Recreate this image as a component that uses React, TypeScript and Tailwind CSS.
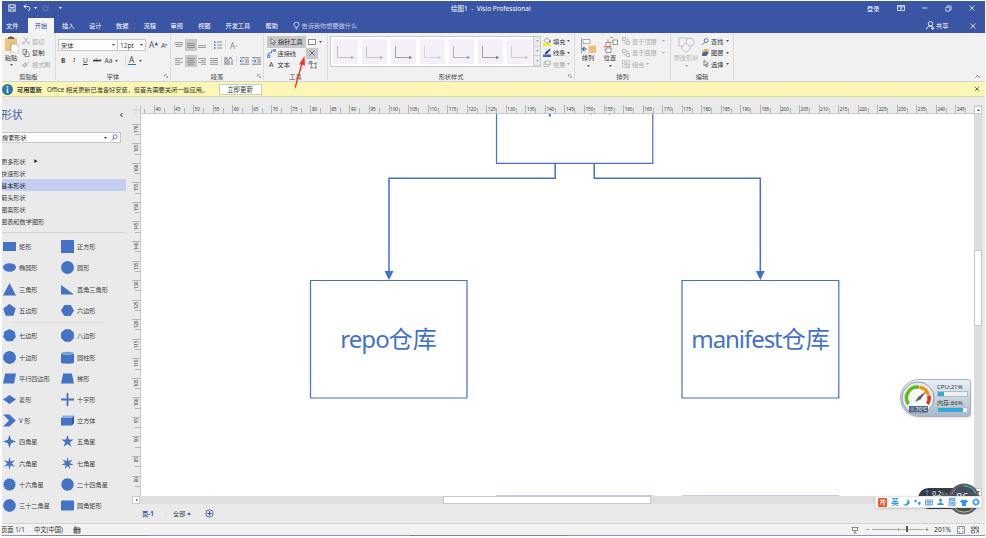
import React from "react";

type P = { children?: React.ReactNode; className?: string };

const T = ({ children, className = "" }: P) => (
  <span className={`whitespace-nowrap ${className}`}>{children}</span>
);

const Caret = ({ className = "text-[#555]" }: { className?: string }) => (
  <svg className={`h-[2px] w-[3px] shrink-0 ${className}`} viewBox="0 0 6 4">
    <path d="M0 0h6L3 4z" fill="currentColor" />
  </svg>
);

const Launcher = () => (
  <svg className="h-1 w-1 shrink-0 text-[#999]" viewBox="0 0 8 8" fill="none" stroke="currentColor" strokeWidth="1.4">
    <path d="M1 6V1h5M3 3l4 4M7 4v3H4" />
  </svg>
);

const Svg = ({ children, className = "", vb = "0 0 16 16" }: P & { vb?: string }) => (
  <svg className={`shrink-0 ${className}`} viewBox={vb} fill="none" stroke="currentColor" strokeWidth="1.5">
    {children}
  </svg>
);

const Group = ({ label, children, className = "", launcher = false }: P & { label: string; launcher?: boolean }) => (
  <section className={`relative flex shrink-0 flex-col border-r border-[#dcdcdc] ${className}`}>
    <div className="h-[38.500px] shrink-0">{children}</div>
    <div className="flex h-[9px] items-center">
      <span className="flex-1 whitespace-nowrap text-center text-[#444]">{label}</span>
      {launcher && <span className="-ml-[6px] mr-[2px]"><Launcher /></span>}
    </div>
  </section>
);

const Lines = ({ rows, className = "" }: { rows: [number, number][]; className?: string }) => (
  <svg className={`h-[9px] w-[10px] shrink-0 ${className}`} viewBox="0 0 10 9" stroke="#777" strokeWidth="0.7">
    {rows.map(([a, b], i) => (
      <path key={i} d={`M${a} ${1.6 + i * 1.9}H${b}`} />
    ))}
  </svg>
);

function TitleBar() {
  return (
    <div className="flex h-[17px] items-center pb-[3px] text-white">
      <Svg className="ml-[6px] h-[8px] w-[8px]"><path d="M1.5 1.5h13v13h-13zM4 2v5h8V2M4 14v-4h8v4" /></Svg>
      <Svg className="ml-[7px] h-[8px] w-[8px]"><path strokeWidth="2" d="M6 1L2 5l4 4M2 5h7c6 0 6 7 1 9" /></Svg>
      <Caret className="ml-[3px] text-white" />
      <Svg className="ml-[5px] h-[7px] w-[7px] text-[#6f86c2]"><path strokeWidth="2" d="M14 8a6 6 0 1 1-4-6M14 1v5H9" /></Svg>
      <Caret className="ml-[10px] text-white" />
      <T className="ml-[389px] w-[80px] text-[6.500px] tracking-[0.02px]">绘图1&nbsp; -&nbsp; Visio Professional</T>
      <T className="ml-[336px]">登录</T>
      <Svg className="ml-[18px] h-[8px] w-[8px]"><path d="M1 3h14v10H1zM1 5.500h14M8 12V7M6 9l2-2 2 2" /></Svg>
      <Svg className="ml-[16px] h-[8px] w-[8px]"><path d="M2 8h11" /></Svg>
      <Svg className="ml-[16px] h-[7px] w-[7px]"><path d="M2 5h9v9H2zM5 5V2h9v9h-3" /></Svg>
      <Svg className="ml-[16px] h-[8px] w-[8px]"><path d="M3 3l10 10M13 3L3 13" /></Svg>
    </div>
  );
}

function TabBar() {
  return (
    <nav className="flex h-[15px] items-center text-white">
      <T className="ml-[4px] w-[22px]">文件</T>
      <T className="flex h-full w-[26px] items-center justify-center bg-[#f4f4f4] text-[#2f4f9f]">开始</T>
      <T className="ml-[8px] w-[27px]">插入</T>
      <T className="w-[27px]">设计</T>
      <T className="w-[27.500px]">数据</T>
      <T className="w-[27px]">流程</T>
      <T className="w-[27.500px]">审阅</T>
      <T className="w-[27.500px]">视图</T>
      <T className="w-[40px]">开发工具</T>
      <T className="w-[26px]">帮助</T>
      <Svg className="ml-[1px] h-[8px] w-[7px]" vb="0 0 14 16"><path d="M5 11c0-2-3-3-3-6a5 5 0 0 1 10 0c0 3-3 4-3 6zM5 14h4" /></Svg>
      <T className="ml-[2px] w-[620px] text-[#c4cdea]">告诉我你想要做什么</T>
      <Svg className="ml-[4.500px] h-[9px] w-[9px]"><path d="M12 5a4 4 0 1 1-8 0 4 4 0 0 1 8 0M1 15c0-4 3-6 7-6 2 0 3 1 4 2M12 10v6M9 13h6" /></Svg>
      <T className="ml-[1px]">共享</T>
      <Svg className="ml-[21px] h-[8px] w-[8px]"><path d="M3 3l10 10M13 3L3 13" /></Svg>
    </nav>
  );
}

function Clipboard() {
  return (
    <Group label="剪贴板" className="w-[54px]">
      <div className="flex">
        <div className="flex w-[18px] flex-col items-center pt-[3px]">
          <svg className="h-[17px] w-[15px]" viewBox="0 0 15 17">
            <path d="M1 2h12v13H1z" fill="#edc27c" />
            <path d="M4 3V1h2a1 1 0 0 1 2 0h2v2z" fill="#666" />
            <path d="M7 8h6l2 2v7H7z" fill="#fff" stroke="#888" strokeWidth=".6" />
          </svg>
          <T className="mt-[1px] leading-[7px] text-[#333]">粘贴</T>
          <Caret className="mt-[3px] text-[#555]" />
        </div>
        <div className="ml-[2px] flex flex-col pt-[2.500px]">
          <div className="flex h-[11.500px] items-center text-[#aaa]">
            <Svg className="h-[8px] w-[8px]"><path d="M4 1l7 10M12 1L5 11M5 12a2 2 0 1 1-4 0 2 2 0 0 1 4 0M15 12a2 2 0 1 1-4 0 2 2 0 0 1 4 0" /></Svg>
            <T className="ml-[2px]">剪切</T>
          </div>
          <div className="flex h-[11.500px] items-center text-[#333]">
            <Svg className="h-[8px] w-[8px] text-[#666]"><path d="M2 1h7v10H2zM6 5h5l3 3v7H6z" fill="#fff" /></Svg>
            <T className="ml-[2px]">复制</T>
          </div>
          <div className="flex h-[11.500px] items-center text-[#aaa]">
            <Svg className="h-[8px] w-[8px]"><path d="M15 2l-6 5M6 5l5 6M1 10l6-4 3 4-5 5z" fill="#ccc" /></Svg>
            <T className="ml-[2px]">格式刷</T>
          </div>
        </div>
      </div>
    </Group>
  );
}

function FontGroup() {
  return (
    <Group label="字体" launcher className="w-[115px]">
      <div className="flex pl-[2px] pt-[6px]">
        <div className="flex h-[12px] w-[60px] items-center justify-between border border-[#c6c6c6] bg-white px-[2px]"><T>宋体</T><Caret /></div>
        <div className="-ml-px flex h-[12px] w-[29px] items-center justify-between border border-[#c6c6c6] bg-white px-[2px]"><T className="text-[6.500px]">12pt</T><Caret /></div>
        <T className="ml-[3px] mt-[1px] w-[12px] text-[8px] text-[#555]">A<sup className="text-[4px] text-[#2f6db5]">▲</sup></T>
        <T className="mt-[2px] text-[7px] text-[#555]">A<sup className="text-[4px] text-[#2f6db5]">▾</sup></T>
      </div>
      <div className="mt-[4px] flex h-[11px] items-center pl-[5px] text-[6.500px] text-[#444]">
        <b className="w-[12px]">B</b>
        <i className="w-[10px] font-serif">I</i>
        <u className="w-[10px]">U</u>
        <s className="w-[11.500px] text-[5px]">abc</s>
        <T className="w-[10px]">Aa</T><Caret />
        <span className="ml-[7px] h-[10px] w-px bg-[#ddd]" />
        <T className="ml-[2px] w-[8px] border-b-[1.500px] border-[#3a66c4] text-center text-[8px] leading-[8px]">A</T>
        <Caret className="ml-[3px] text-[#555]" />
      </div>
    </Group>
  );
}

const full: [number, number][] = [[1, 9], [1, 9], [1, 9], [1, 9]];

function Paragraph() {
  return (
    <Group label="段落" launcher className="w-[93px]">
      <div className="flex h-[18.500px] items-center pl-[3px] pt-[5.500px]">
        <Lines rows={[[1, 9], [1, 9], [2, 8]]} />
        <span className="ml-px flex h-[12px] w-[12px] items-center justify-center bg-[#c8c8c8]"><Lines rows={[[1, 9], [1, 9], [1, 9]]} className="mt-[2px]" /></span>
        <Lines rows={[[1, 9], [1, 9]]} className="mt-[6px]" />
        <span className="ml-[4px] h-[10px] w-px bg-[#ddd]" />
        <svg className="ml-[2px] h-[8px] w-[8px]" viewBox="0 0 8 8" stroke="#666" strokeWidth=".7"><path d="M3 1h5M3 4h5M3 7h5" /><path d="M0 1h1.500M0 4h1.500M0 7h1.500" stroke="#3a66c4" strokeWidth="1.300" /></svg>
        <span className="ml-[3px] h-[10px] w-px bg-[#ddd]" />
        <T className="ml-[4px] text-[8px] text-[#888]">A<sup className="text-[4px]">ↄ</sup></T>
      </div>
      <div className="mt-[3.500px] flex h-[12px] items-center pl-[3px]">
        <Lines rows={[[1, 9], [1, 6], [1, 9], [1, 6]]} />
        <span className="ml-px flex h-[12px] w-[12px] items-center justify-center bg-[#c8c8c8]"><Lines rows={[[1, 9], [2, 8], [1, 9], [2, 8]]} /></span>
        <Lines rows={[[1, 9], [4, 9], [1, 9], [4, 9]]} />
        <Lines rows={full} className="ml-[2px]" />
        <span className="ml-[2px] h-[10px] w-px bg-[#ddd]" />
        <svg className="ml-[2px] h-[8px] w-[9px]" viewBox="0 0 9 8" stroke="#555" strokeWidth=".8" fill="none"><path d="M1 0v8M3 0v8M5 4v4M8 4v4" /><path d="M4.500 3.500L6.500 0l2 3.500" stroke="#3a66c4" /></svg>
        <span className="ml-[3px] h-[10px] w-px bg-[#ddd]" />
        {[0, 1].map((k) => (
          <svg key={k} className="ml-[3px] h-[8px] w-[9px]" viewBox="0 0 9 8" stroke="#666" strokeWidth=".8"><path d="M0 .8h9M5 3h4M5 5h4M0 7.200h9" /><path d={k ? "M0 4h4M2.500 2.500L4 4 2.500 5.500" : "M0 4h4M1.500 2.500L0 4l1.500 1.500"} stroke="#3a66c4" fill="none" /></svg>
        ))}
      </div>
    </Group>
  );
}

function Tools() {
  return (
    <Group label="工具" className="w-[64px]">
      <div className="flex pl-[3px] pt-[2.500px]">
        <div className="w-[39px]">
          <div className="flex h-[12px] items-center bg-[#c8c8c8] pl-[3px] text-[#222]">
            <Svg className="h-[8px] w-[6px] text-[#555]" vb="0 0 12 16"><path d="M2 1v11l3-3 2 5 2-1-2-5h4z" fill="#fff" /></Svg><T className="ml-[2px]">指针工具</T>
          </div>
          <div className="flex h-[11.500px] items-center text-[#333]">
            <Svg className="h-[9px] w-[9px] text-[#3a66c4]"><path d="M1 11h4v4H1zM3 10V7h5V3h4M12 1h3v3h-3z" /></Svg><T className="ml-[1.500px]">连接线</T>
          </div>
          <div className="flex h-[11.500px] items-center pl-[2px] text-[#333]">
            <T className="w-[8.500px] text-[7px]">A</T><T>文本</T>
          </div>
        </div>
        <div>
          <div className="flex h-[12px] items-center"><span className="ml-[2px] h-[6px] w-[8px] border border-[#888] bg-white" /><Caret className="ml-[3px] text-[#555]" /></div>
          <div className="flex h-[11px] w-[12px] items-center justify-center bg-[#c8c8c8]"><Svg className="h-[8px] w-[8px] text-[#4b70ac]"><path strokeWidth="2" d="M3 3l10 10M13 3L3 13" /></Svg></div>
          <div className="flex h-[12px] items-center pl-[2px]"><Svg className="h-[9px] w-[9px] text-[#666]"><path d="M6 6h8v8H6zM4 6h4M4 14h4M14 4v4M14 12v4" strokeDasharray="3 1" /><path d="M2 8V3h5M5 1l2 2-2 2" stroke="#3a66c4" /></Svg></div>
        </div>
      </div>
      <svg className="pointer-events-none absolute left-[28px] top-[21px] z-10 h-[36px] w-[16px]" viewBox="0 0 16 36"><path d="M3.200 33.500L10.500 7.500" stroke="#ff2a18" strokeWidth="1.300" /><path d="M12.500 2l.4 10-2.600-1.600-3.200.1z" fill="#ff2a18" /></svg>
    </Group>
  );
}

function ShapeStyles() {
  const tones = ["#b5adb9", "#bdb5c1", "#8d8591", "#d3cbd7", "#aaa2ae", "#8d8591", "#c8c0cc"];
  return (
    <Group label="形状样式" launcher className="w-[247px]">
      <div className="flex pl-[2px] pt-[3px]">
        <div className="flex h-[31px] w-[204px] items-center gap-[4px] border border-[#c9c9c9] bg-white pl-[2px]">
          {tones.map((c, i) => (
            <svg key={i} className="h-[25px] w-[25px] shrink-0 bg-[#f5f0f8]" viewBox="0 0 25 25" fill="none"><path d="M4.500 7v11.500H19" stroke={c} strokeWidth=".8" /><path d="M18 16.800l3.500 1.700-3.500 1.700z" fill={c} /></svg>
          ))}
        </div>
        <div className="flex h-[31px] w-[7px] flex-col justify-around border-y border-r border-[#c9c9c9] bg-[#ececec]">
          {[0, 1, 2].map((k) => <span key={k} className="flex h-[10px] items-center justify-center border-b border-[#d2d2d2]"><Caret className="text-[#aaa]" /></span>)}
        </div>
        <div className="ml-[2px] -mt-[.5px]">
          <div className="flex h-[11.500px] items-center text-[#333]">
            <svg className="mr-[2px] h-[9px] w-[8px]" viewBox="0 0 8 9"><path d="M0 6.500h8V9H0z" fill="#fff000" /><path d="M1 3.500L4 1l3 3-3 2.500z" fill="#fff" stroke="#777" strokeWidth=".7" /><path d="M7 3v3" stroke="#3a66c4" /></svg>
            <T>填充</T><Caret className="ml-[2px] text-[#555]" />
          </div>
          <div className="flex h-[11.500px] items-center text-[#333]">
            <svg className="mr-[2px] h-[9px] w-[8px]" viewBox="0 0 8 9"><path d="M0 6.500h8V9H0z" fill="#3a66c4" /><path d="M1.500 6L3 3.500 7 .5 7.500 2 4 6z" fill="#2c5595" /></svg>
            <T>线条</T><Caret className="ml-[2px] text-[#555]" />
          </div>
          <div className="flex h-[11.500px] items-center text-[#aaa]">
            <Svg className="mr-[2px] h-[8px] w-[8px]"><path d="M5 2h9v7l-3 4H2V6zM5 2v7h9" /></Svg>
            <T>效果</T><Caret className="ml-[2px] text-[#aaa]" />
          </div>
        </div>
      </div>
    </Group>
  );
}

function Arrange() {
  return (
    <Group label="排列" className="w-[96px]">
      <div className="flex">
        <div className="flex w-[24px] flex-col items-center pt-[5px] pl-[2px]">
          <svg className="h-[15px] w-[15px]" viewBox="0 0 15 15"><path d="M.5 0v15" stroke="#888" strokeWidth=".8" /><path d="M2 1.500h7v4H2z" fill="#fff" stroke="#888" strokeWidth=".7" /><path d="M7.500 7.500H15V15H7.500z" fill="#eec077" /><path d="M1.500 11H6M3.500 9l-2 2 2 2" stroke="#2e73c2" strokeWidth="1.200" fill="none" /></svg>
          <T className="mt-[1px] leading-[8px] text-[#333]">排列</T><Caret className="mt-[3px] text-[#555]" />
        </div>
        <div className="ml-px flex w-[20px] flex-col items-center pt-[4px]">
          <svg className="h-[16px] w-[16px]" viewBox="0 0 16 16" fill="none" strokeWidth=".8"><path d="M4 5.500h4v4H4zM11 3h4.500v4.500H11zM4 11h5v4.500H4z" fill="#fff" stroke="#777" /><path d="M8 .5h3M6 5.500V2M8 5h3M1 9.800h9M2 13h2" stroke="#dd694b" /></svg>
          <T className="mt-[1px] leading-[8px] text-[#333]">位置</T><Caret className="mt-[3px] text-[#555]" />
        </div>
        <div className="ml-[2px] pt-[2.500px] text-[#aaa]">
          {["置于顶层", "置于底层", "组合"].map((t, i) => (
            <div key={t} className="flex h-[11.500px] items-center">
              <Svg className="mr-[2px] h-[8px] w-[8px]">{i < 2 ? <path d="M1 1h6v6H1zM9 9h6v6H9zM9 4h3v3M4 9v3h3" /> : <path d="M1 1h14v14H1zM4 4h5v5H4zM8 8h5v5H8z" strokeDasharray="3 1" />}</Svg>
              <T>{t}</T><Caret className={i < 2 ? "ml-[5px] text-[#aaa]" : "ml-[2px] text-[#aaa]"} />
            </div>
          ))}
        </div>
      </div>
    </Group>
  );
}

function Editing() {
  return (
    <Group label="编辑" className="w-[63px]">
      <div className="flex">
        <div className="flex w-[28px] flex-col items-center pl-[2px] pt-[3px] text-[#b4b4b4]">
          <Svg className="h-[17px] w-[17px]" vb="0 0 17 17"><g strokeWidth=".8" fill="#f4f2f8"><path d="M1 2h8v8H1z" /><path d="M16 6a4 4 0 1 1-8 0 4 4 0 0 1 8 0" /><path d="M8 7l5 5-5 4.500L3 12z" /></g></Svg>
          <T className="mt-[1px] leading-[8px]">更改形状</T><Caret className="mt-[3px] text-[#aaa]" />
        </div>
        <div className="ml-[3px] pt-[2.500px] text-[#333]">
          <div className="flex h-[11.500px] items-center"><Svg className="mr-[2px] h-[7px] w-[7px] text-[#2e73b2]"><path strokeWidth="2" d="M14 6a4.500 4.500 0 1 1-9 0 4.500 4.500 0 0 1 9 0M6 10l-5 5" /></Svg><T>查找</T><Caret className="ml-[2.500px] text-[#555]" /></div>
          <div className="flex h-[11.500px] items-center"><svg className="mr-[2px] h-[7px] w-[7px]" viewBox="0 0 8 8"><path d="M0 6l3-2h5L5 8H0z" fill="#666" /><path d="M0 4.500l3-2h5l-3 3H0z" fill="#2e73b2" /><path d="M0 2.500L3 0h5L5 3H0z" fill="#edaa4c" /></svg><T>图层</T><Caret className="ml-[2.500px] text-[#555]" /></div>
          <div className="flex h-[11.500px] items-center"><Svg className="mr-[2px] h-[8px] w-[7px] text-[#555]" vb="0 0 14 16"><path d="M4 1v11l3-3 2 5 2-1-2-5h4z" fill="#fff" /></Svg><T>选择</T><Caret className="ml-[2.500px] text-[#555]" /></div>
        </div>
      </div>
    </Group>
  );
}

const reg = (n: number, r = 6.2, rot = -90) =>
  Array.from({ length: n }, (_, i) => {
    const a = ((rot + (360 / n) * i) * Math.PI) / 180;
    return `${(6.5 + r * Math.cos(a)).toFixed(2)},${(6.5 + r * Math.sin(a)).toFixed(2)}`;
  }).join(" ");

const star = (n: number, inner: number) =>
  Array.from({ length: n * 2 }, (_, i) => {
    const a = ((-90 + (180 / n) * i) * Math.PI) / 180;
    const r = i % 2 ? inner : 6.5;
    return `${(6.5 + r * Math.cos(a)).toFixed(2)},${(6.5 + r * Math.sin(a)).toFixed(2)}`;
  }).join(" ");

const poly = (points: string) => <polygon points={points} />;

const stencils: [string, React.ReactNode][][] = [
  [["矩形", poly("0,2 13,2 13,11 0,11")], ["正方形", poly("0,0 13,0 13,13 0,13")]],
  [["椭圆形", <ellipse cx="6.5" cy="6.5" rx="6.5" ry="4.2" />], ["圆形", <circle cx="6.5" cy="6.5" r="6.5" />]],
  [["三角形", poly("6.5,0 13,12.500 0,12.500")], ["直角三角形", poly("0,2 13,11.500 0,11.500")]],
  [["五边形", poly(reg(5, 6.6))], ["六边形", poly("3.3,1 9.7,1 13,6.5 9.7,12 3.3,12 0,6.5")]],
  [["七边形", poly(reg(7, 6.5))], ["八边形", poly(reg(8, 6.9, 22.5))]],
  [["十边形", poly(reg(10, 6.6))], ["圆柱形", <><path d="M0 2v9.500c0 1.600 13 1.600 13 0V2z" /><ellipse cx="6.500" cy="2" rx="6.500" ry="1.300" fill="#6b90d4" stroke="#e8edf7" strokeWidth=".5" /></>]],
  [["平行四边形", poly("2.2,1.500 13,1.500 11,11.500 0,11.500")], ["梯形", poly("2.200,1.500 10.800,1.500 13,11.500 0,11.500")]],
  [["菱形", poly("6.5,2 13,6.5 6.5,11 0,6.5")], ["十字形", poly("5.600,0 7.400,0 7.400,5.600 13,5.600 13,7.400 7.400,7.400 7.400,13 5.600,13 5.600,7.400 0,7.400 0,5.600 5.600,5.600")]],
  [["V 形", poly("0,0.500 6.500,0.500 12.800,6.500 6.500,12.500 0,12.500 6,6.500")], ["立方体", <><path d="M0 4h11v7.500H0z" /><path d="M0 4l2-2.500h11L11 4z" fill="#91aee1" /><path d="M11 4l2-2.500V9l-2 2.500z" fill="#3057a0" /></>]],
  [["四角星", poly(star(4, 2.3))], ["五角星", poly(star(5, 2.500))]],
  [["六角星", poly(star(6, 2.2))], ["七角星", poly(star(7, 2.4))]],
  [["十六角星", poly(star(16, 5.600))], ["二十四角星", poly(star(24, 5.900))]],
  [["三十二角星", poly(star(32, 6))], ["圆角矩形", <rect y="1.500" width="13" height="10" rx=".8" />]],
];

const StencilRow = ({ row }: { row: [string, React.ReactNode][] }) => (
  <div className="flex h-[21.200px] items-center pl-px">
    {row.map(([name, icon]) => (
      <div key={name} className="flex w-[58px] items-center">
        <svg className="h-[13px] w-[13px] shrink-0" viewBox="0 0 13 13" fill="#4472c4">{icon}</svg>
        <T className="ml-[3px] text-[#444]">{name}</T>
      </div>
    ))}
  </div>
);

function ShapesPanel() {
  return (
    <aside className="flex w-[130px] shrink-0 flex-col overflow-hidden">
      <div className="mt-[9px] flex h-[17px] w-[124px] items-center justify-between">
        <T className="-ml-px text-[10.800px] text-[#3d5ba8]">形状</T>
        <Svg className="mr-[2px] h-[6px] w-[5px] text-[#222]" vb="0 0 10 12"><path strokeWidth="2" d="M7 2L3 6l4 4" /></Svg>
      </div>
      <div className="mt-[9px] flex h-[11px] w-[119px] items-center border border-l-0 border-[#c6c6c6] bg-white">
        <T className="text-[#222]">搜索形状</T>
        <Caret className="ml-auto mr-[4px] text-[#333]" />
        <Svg className="mr-[2px] h-[7px] w-[7px] text-[#2e73b2]"><path strokeWidth="2" d="M14 6a4.500 4.500 0 1 1-9 0 4.500 4.500 0 0 1 9 0M6 10l-5 5" /></Svg>
      </div>
      <div className="mt-[12.500px] w-[124px] text-[#444]">
        <div className="flex h-[11.500px] items-center"><T className="-ml-px">更多形状</T><T className="ml-[8px] text-[4px] text-[#222]">▶</T></div>
        <div className="flex h-[12px] items-center"><T className="-ml-px">快速形状</T></div>
        <div className="flex h-[12.200px] items-center bg-[#c3cef1] text-[#222]"><T className="-ml-px">基本形状</T></div>
        <div className="flex h-[12.200px] items-center"><T className="-ml-px">箭头形状</T></div>
        <div className="flex h-[12.200px] items-center"><T className="-ml-px">图案形状</T></div>
        <div className="flex h-[12.200px] items-center"><T className="-ml-px">图表和数学图形</T></div>
      </div>
      <div className="mt-[4px] w-[124px] border-t border-[#d5d5d5]" />
      <div className="mt-[3.300px]">{stencils.slice(0, 4).map((r, i) => <StencilRow key={i} row={r} />)}</div>
      <div className="ml-[11px] mt-[1.500px] w-[92px] border-t border-[#dcdcdc]" />
      <div className="mt-[2px]">{stencils.slice(4).map((r, i) => <StencilRow key={i} row={r} />)}</div>
    </aside>
  );
}

function HorizontalRuler() {
  return (
    <div className="flex h-[9px] overflow-hidden border-b border-[#c9c9c9] text-[4.700px] leading-[8px] text-[#444]">
      <div className="h-full w-[13px] shrink-0"><div className="ml-[3px] mt-[4px] h-[4px] border-l border-[#aaa]" /></div>
      {Array.from({ length: 42 }, (_, i) => (
        <div key={i} className="flex h-full w-[19.550px] shrink-0 items-end border-l border-[#b5b5b5]">
          <span className="w-[9px] self-start whitespace-nowrap pl-[.5px] tracking-[-0.1px]">{40 + i * 5}</span>
          <span className="h-[5px] border-l border-[#b5b5b5]" />
        </div>
      ))}
    </div>
  );
}

function VerticalRuler() {
  return (
    <div className="flex h-[391px] w-[8px] shrink-0 flex-col overflow-hidden text-[4.700px] text-[#444]">
      <div className="flex h-[9px] shrink-0 items-center justify-center text-[#ccc]"><Svg className="h-[8px] w-[8px]"><path d="M8 0v16M0 8h16" /></Svg></div>
      <div className="h-[9.700px] shrink-0" />
      {Array.from({ length: 19 }, (_, i) => (
        <div key={i} className="flex h-[19.550px] w-[8px] shrink-0 flex-col border-t border-[#b5b5b5]">
          <span className="h-[9.300px] w-[8px] rotate-180 whitespace-nowrap pb-[.5px] text-right leading-[8px] tracking-[-0.1px] [writing-mode:vertical-rl]">{170 - i * 5}</span>
          <span className="ml-[3px] border-t border-[#b5b5b5]" />
        </div>
      ))}
    </div>
  );
}

function Drawing() {
  return (
    <div className="relative h-[382px] w-[833px] overflow-hidden bg-white text-[#4472c4]">
      <svg className="absolute left-0 top-0 h-[382px] w-[833px]" viewBox="141 114 833 382" fill="none" stroke="#4472c4">
        <path strokeWidth="1.200" d="M496.500 100V163.300H652.800V100M310.500 280.500H467V398H310.500zM682 280.500H838.800V398H682z" />
        <path strokeWidth="1.500" d="M555.200 163V178.300H389V273M594.200 163V178.300H760.300V273" />
        <path d="M384.500 271h9l-4.500 9zM755.800 271h9l-4.500 9z" fill="#4472c4" stroke="none" />
        <path stroke="#c3cbe6" d="M496 495.500h157M682 495.500h157" />
        <path strokeWidth="2" d="M549.800 113.500v3" />
        <path strokeWidth="1.500" d="M591 113v1.500M610 113v1.500" />
      </svg>
      <div className="absolute left-[169px] top-[165px] flex h-[118px] w-[157px] items-center justify-center text-[24px]"><T className="tracking-[-0.9px]">repo</T><T>仓库</T></div>
      <div className="absolute left-[541px] top-[165px] flex h-[118px] w-[157px] items-center justify-center text-[24px]"><T className="tracking-[-1.05px]">manifest</T><T>仓库</T></div>
    </div>
  );
}

function Monitor() {
  return (
    <div className="absolute left-[900px] top-[379px] flex h-[38px] w-[71px] rounded-l-[19px] rounded-r-[3px] border border-[#a9b4c2] bg-gradient-to-b from-[#e9f1f6] to-[#a9b9ca] shadow">
      <svg className="-ml-px h-[37px] w-[36px] shrink-0" viewBox="0 0 36 37" fill="none">
        <circle cx="18" cy="18" r="16" fill="#eef1f2" stroke="#8f9caa" />
        <circle cx="18" cy="18" r="14" fill="#fbfcfc" stroke="#dde2e6" />
        <path d="M8.500 24A10.800 10.800 0 0 1 19 7.200" stroke="#5fb91c" strokeWidth="3.400" />
        <path d="M19.500 7.200A10.800 10.800 0 0 1 28.500 15" stroke="#f29214" strokeWidth="3.400" />
        <path d="M28.800 15.500A10.800 10.800 0 0 1 27.500 24" stroke="#d23c14" strokeWidth="3.400" />
        <path d="M15 22l3-5L26.500 11l-6 8.500z" fill="#666" />
        <rect x="9" y="26" width="19" height="6.500" fill="#4f6a8a" />
        <path d="M11 28h3M11 30h3" stroke="#a9c3dd" strokeWidth=".8" />
        <text x="15.500" y="31.300" fontSize="5.500" fill="#fff">70℃</text>
      </svg>
      <div className="ml-[1px] flex flex-col pt-[3px] text-[6.100px] leading-[7px] text-[#333]">
        <T>CPU:21%</T>
        <span className="mt-[1px] flex h-[6px] w-[31px] border border-[#b5bcc2] bg-[#eee]"><span className="w-[6px] bg-[#36a8d6]" /></span>
        <T className="mt-[2px]">内存:86%</T>
        <span className="mt-px flex h-[6px] w-[31px] border border-[#b5bcc2] bg-[#eee]"><span className="w-[25px] bg-[#36a8d6]" /></span>
      </div>
    </div>
  );
}

function SpeedBall() {
  return (
    <div className="absolute left-[918px] top-[483px] h-[32px] w-[62px]">
      <div className="absolute left-0 top-[5px] h-[21px] w-[48px] rounded-l-[11px] bg-[#363c4b] pl-[6px] pt-[2px] text-[6.500px] leading-[8px] text-white"><span className="text-[#5ac0f5]">↑</span> 0.2<span className="text-[4.500px] text-[#aaa]">K/s</span></div>
      <svg className="absolute left-[30px] top-0 h-[32px] w-[32px]" viewBox="0 0 32 32" fill="none">
        <circle cx="16" cy="16" r="15.500" fill="#5a6070" />
        <circle cx="16" cy="16" r="13" fill="#4b5060" />
        <path d="M16 3a13 13 0 0 1 12 8" stroke="#3cc9bb" /><path d="M4 11A13 13 0 0 1 8 6" stroke="#e36a6a" /><path d="M7 25.500a13 13 0 0 0 18 0" stroke="#c7cc56" />
        <text x="8" y="18" fontSize="11" fill="#eee">86</text>
      </svg>
    </div>
  );
}

function InputBar() {
  return (
    <div className="absolute left-[875px] top-[496px] flex h-[12px] w-[107px] items-center border border-[#e4e4e4] bg-white pl-[2px] text-[#3c94e8] shadow-sm">
      <svg className="h-[9px] w-[9px]" viewBox="0 0 9 9"><rect width="9" height="9" rx="1" fill="#f4511e" /><path d="M1.500 2.200h6M4 2.500L2 7M5.500 2.500V4.500H3.500M7.500 3.500L5 7h2" stroke="#fff" fill="none" /></svg>
      <T className="ml-[4px] w-[8px] text-[7.800px] font-bold">英</T>
      <svg className="ml-[4px] h-[7px] w-[7px]" viewBox="0 0 14 14" fill="currentColor"><path d="M9 0c5 3 6 9 1 12-4 3-8 1-10-1 7 1 10-4 9-11z" /></svg>
      <svg className="ml-[4px] h-[7px] w-[7px]" viewBox="0 0 14 14" fill="currentColor"><circle cx="3" cy="4" r="2.500" /><path d="M8 6h5c1 4-1 6-4 8 2-3 1-4-1-5z" /></svg>
      <svg className="ml-[4px] h-[7px] w-[8px]" viewBox="0 0 16 14" fill="none" stroke="currentColor" strokeWidth="1.700"><path d="M1 2h14v10H1zM3 5h10M3 7.500h10M4 10h8" /></svg>
      <svg className="ml-[4px] h-[8px] w-[7px]" viewBox="0 0 14 16" fill="currentColor"><circle cx="7" cy="4" r="3.200" /><path d="M5.500 7h3v3l5 1.500V14H.5v-2.500L5.500 10z" /></svg>
      <T className="ml-[4px] w-[8px] text-[7.800px] font-bold">简</T>
      <svg className="ml-[3.500px] h-[7px] w-[8px]" viewBox="0 0 16 14" fill="currentColor"><path d="M5 1q3 2 6 0l5 3-2 4-2-1v7H4V7L2 8 0 4z" /></svg>
      <svg className="ml-[4px] h-[8px] w-[8px]" viewBox="0 0 16 16" fill="none" stroke="currentColor"><circle cx="8" cy="8" r="4.800" strokeWidth="2.800" /><circle cx="8" cy="8" r="7" strokeWidth="1.500" strokeDasharray="3 2.500" /></svg>
    </div>
  );
}

function StatusBar() {
  return (
    <footer className="flex h-[12px] shrink-0 items-center border-t border-[#d4d4d4] bg-[#f2f2f2] text-[6.300px] text-[#333]">
      <T className="-ml-px w-[33px]">页面 1/1</T>
      <T className="w-[39px]">中文(中国)</T>
      <Svg className="h-[8px] w-[8px]"><path d="M2 4h12v10H2zM2 7h12M2 10h12M6 4v10M2 2h5" /></Svg>
      <Svg className="ml-[770px] h-[8px] w-[8px] text-[#666]"><path d="M1 3h14M3 3v6h10V3M8 9v5M5 14h6" /></Svg>
      <T className="ml-[7px]">−</T>
      <span className="relative ml-[2px] h-px w-[52px] bg-[#aaa]"><span className="absolute -top-[3px] left-[34px] h-[6px] w-[2px] bg-[#555]" /><span className="absolute -top-px left-[26px] h-[3px] w-px bg-[#aaa]" /></span>
      <T className="ml-[1.500px] w-[9px]">+</T>
      <T className="w-[23px] text-[6.600px]">201%</T>
      <Svg className="h-[8px] w-[8px] text-[#777]"><path d="M1 1h14v14H1zM4 6V4h2M10 4h2v2M12 10v2h-2M6 12H4v-2" /></Svg>
      <Svg className="ml-[6px] h-[8px] w-[8px] text-[#555]"><path d="M1 2h6v4H1zM9 2h6v4H9zM1 9h6v5H1zM10 14l5-5M11 9h4v4" /></Svg>
    </footer>
  );
}

export default function App() {
  return (
    <div className="relative flex h-[538px] w-[986px] flex-col overflow-hidden bg-white pl-[2px] pr-px pt-px text-[6.200px] leading-[9px] text-[#333] [font-family:'Noto_Sans','Noto_Sans_CJK_SC',sans-serif]">
      <header className="h-8 shrink-0 bg-[#3955a3]">
        <TitleBar />
        <TabBar />
      </header>
      <div className="flex h-[49px] shrink-0 border-b border-[#d2d2d2] bg-[#f1f1f1] pb-px">
        <Clipboard />
        <FontGroup />
        <Paragraph />
        <Tools />
        <ShapeStyles />
        <Arrange />
        <Editing />
        <Svg className="ml-auto mr-[5px] mt-[41px] h-[5px] w-[5px] text-[#444]" vb="0 0 10 10"><path d="M1 7l4-4 4 4" /></Svg>
      </div>
      <div className="flex h-[15px] shrink-0 items-center border-b border-[#dedba6] bg-[#fcf6b4]">
        <svg className="h-[11px] w-[11px]" viewBox="0 0 11 11"><circle cx="5.500" cy="5.500" r="5.500" fill="#2f76b4" /><path d="M5.500 2v1.500M5.500 4.500V9" stroke="#fff" strokeWidth="1.500" /></svg>
        <T className="ml-[4px] w-[30px] font-bold">可用更新</T>
        <T className="w-[171.500px]">Office 相关更新已准备好安装，但首先需要关闭一些应用。</T>
        <button className="h-[11px] w-[43px] border border-[#c9c9c9] bg-white text-[6.400px]">立即更新</button>
        <Svg className="ml-auto mr-[5px] h-[6px] w-[6px] text-[#333]"><path strokeWidth="2" d="M3 3l10 10M13 3L3 13" /></Svg>
      </div>
      <div className="flex min-h-0 flex-1 bg-[#eaeaea]">
        <ShapesPanel />
        <main className="flex min-w-0 flex-1 flex-col pt-[8px]">
          <div className="flex">
            <VerticalRuler />
            <div className="flex w-[834px] flex-col border-l border-[#c9c9c9]">
              <HorizontalRuler />
              <Drawing />
            </div>
            <div className="flex w-[8px] flex-col bg-[#dedede]">
              <span className="mt-px flex h-[8px] items-center justify-center border border-[#c8c8c8] bg-white"><Caret className="rotate-180 text-[#555]" /></span>
              <span className="mt-[136px] h-[76px] border border-[#c8c8c8] bg-white" />
              <span className="mt-auto flex h-[8px] items-center justify-center border border-[#c8c8c8] bg-white"><Caret /></span>
            </div>
          </div>
          <div className="flex h-[8px]">
            <span className="flex w-[8px] items-center justify-center border border-[#c8c8c8] bg-white"><Caret className="rotate-90 text-[#333]" /></span>
            <span className="flex w-[834px] bg-[#dedede]"><span className="ml-[303px] w-[208px] border border-[#c8c8c8] bg-white" /></span>
          </div>
          <div className="flex flex-1 items-center text-[#444]">
            <T className="ml-[10px] w-[23px] font-bold text-[#3955a3]">页-1</T>
            <span className="h-[8px] w-px bg-[#ddd]" />
            <T className="ml-[7px]">全部</T>
            <Caret className="ml-[2px] h-[3px] w-[4px] rotate-180 text-[#3955a3]" />
            <Svg className="ml-[14px] h-[9px] w-[9px] text-[#3955a3]"><circle cx="8" cy="8" r="6.500" /><path strokeWidth="2" d="M8 4v8M4 8h8" /></Svg>
          </div>
        </main>
      </div>
      <StatusBar />
      <div className="flex h-px shrink-0 bg-[#8f97ae]"><span className="ml-[26px] w-[120px] bg-[#85858a]" /><span className="ml-[262px] w-[158px] bg-[#808085]" /></div>
      <div className="h-[2px] shrink-0" />
      <Monitor />
      <SpeedBall />
      <InputBar />
    </div>
  );
}
